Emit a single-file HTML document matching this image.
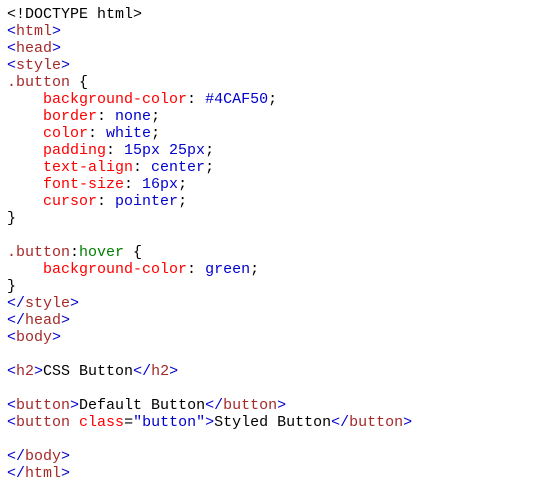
<!DOCTYPE html>
<html><head><style>
body{margin:0;background:#fff;}
pre{margin:0;padding:6px 0 0 7px;font-family:"Liberation Mono",monospace;font-size:15px;line-height:17px;color:#000;}
.b{color:#0000cd}.t{color:#a52a2a}.r{color:#ff0000}.g{color:#008000}
</style></head><body><pre>&lt;!DOCTYPE html&gt;
<span class="b">&lt;</span><span class="t">html</span><span class="b">&gt;</span>
<span class="b">&lt;</span><span class="t">head</span><span class="b">&gt;</span>
<span class="b">&lt;</span><span class="t">style</span><span class="b">&gt;</span>
<span class="t">.button</span> {
    <span class="r">background-color</span>: <span class="b">#4CAF50</span>;
    <span class="r">border</span>: <span class="b">none</span>;
    <span class="r">color</span>: <span class="b">white</span>;
    <span class="r">padding</span>: <span class="b">15px 25px</span>;
    <span class="r">text-align</span>: <span class="b">center</span>;
    <span class="r">font-size</span>: <span class="b">16px</span>;
    <span class="r">cursor</span>: <span class="b">pointer</span>;
}

<span class="t">.button</span>:<span class="g">hover</span> {
    <span class="r">background-color</span>: <span class="b">green</span>;
}
<span class="b">&lt;/</span><span class="t">style</span><span class="b">&gt;</span>
<span class="b">&lt;/</span><span class="t">head</span><span class="b">&gt;</span>
<span class="b">&lt;</span><span class="t">body</span><span class="b">&gt;</span>

<span class="b">&lt;</span><span class="t">h2</span><span class="b">&gt;</span>CSS Button<span class="b">&lt;/</span><span class="t">h2</span><span class="b">&gt;</span>

<span class="b">&lt;</span><span class="t">button</span><span class="b">&gt;</span>Default Button<span class="b">&lt;/</span><span class="t">button</span><span class="b">&gt;</span>
<span class="b">&lt;</span><span class="t">button</span> <span class="r">class</span>=<span class="b">"button"</span><span class="b">&gt;</span>Styled Button<span class="b">&lt;/</span><span class="t">button</span><span class="b">&gt;</span>

<span class="b">&lt;/</span><span class="t">body</span><span class="b">&gt;</span>
<span class="b">&lt;/</span><span class="t">html</span><span class="b">&gt;</span></pre></body></html>
